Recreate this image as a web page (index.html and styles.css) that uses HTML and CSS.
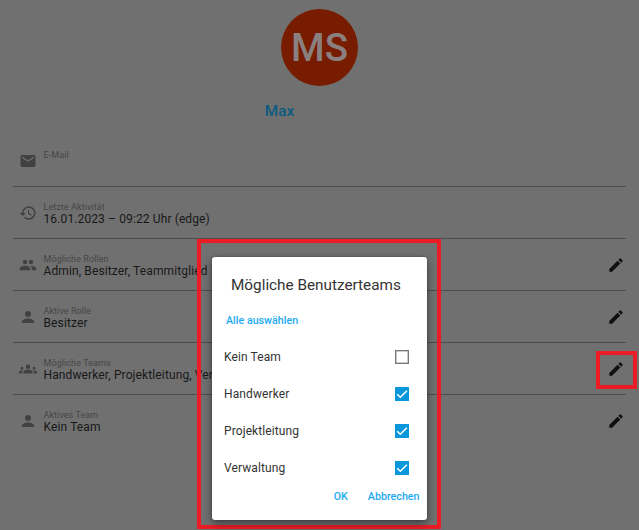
FILE: index.html
```html
<!DOCTYPE html>
<html lang="de">
<head>
<meta charset="utf-8">
<title>Profil</title>
<link rel="stylesheet" href="styles.css">
</head>
<body>
<svg class="symbols" aria-hidden="true">
  <symbol id="mail" viewBox="0 0 24 24"><path d="M20 4H4c-1.100 0-2 .9-2 2v12c0 1.100.9 2 2 2h16c1.100 0 2-.9 2-2V6c0-1.100-.9-2-2-2zm0 4-8 5-8-5V6l8 5 8-5z"/></symbol>
  <symbol id="history" viewBox="0 0 24 24"><path d="M13 3a9 9 0 0 0-9 9H1l3.900 3.900.07.14L9 12H6a7 7 0 1 1 2.060 4.940l-1.420 1.420A9 9 0 1 0 13 3zm-1 5v5l4.280 2.540.72-1.210-3.500-2.080V8z"/></symbol>
  <symbol id="people" viewBox="0 0 24 24"><path d="M16 11a3 3 0 1 0-3-3 3 3 0 0 0 3 3zm-8 0a3 3 0 1 0-3-3 3 3 0 0 0 3 3zm0 2c-2.330 0-7 1.170-7 3.500V19h14v-2.500C15 14.170 10.330 13 8 13zm8 0c-.29 0-.62.02-.97.05 1.160.84 1.970 1.970 1.970 3.450V19h6v-2.500c0-2.330-4.670-3.500-7-3.500z"/></symbol>
  <symbol id="person" viewBox="0 0 24 24"><path d="M12 12a4 4 0 1 0-4-4 4 4 0 0 0 4 4zm0 2c-2.670 0-8 1.340-8 4v2h16v-2c0-2.660-5.330-4-8-4z"/></symbol>
  <symbol id="groups" viewBox="0 0 24 24"><path d="M12 12.750c1.630 0 3.070.39 4.240.9 1.080.48 1.760 1.560 1.760 2.730V18H6v-1.610c0-1.180.68-2.260 1.760-2.730 1.170-.52 2.610-.91 4.240-.91zM4 13a2 2 0 1 0 0-4 2 2 0 0 0 0 4zm1.130 1.100A7 7 0 0 0 4 14c-.99 0-1.930.21-2.780.58A2 2 0 0 0 0 16.430V18h4.500v-1.610c0-.83.23-1.610.63-2.290zM20 13a2 2 0 1 0 0-4 2 2 0 0 0 0 4zm4 3.430c0-.81-.48-1.530-1.220-1.850A7 7 0 0 0 20 14c-.39 0-.76.04-1.130.1.400.68.630 1.460.63 2.290V18H24zM12 6a3 3 0 1 1 0 6 3 3 0 0 1 0-6z"/></symbol>
  <symbol id="edit" viewBox="0 0 24 24"><path d="M3 17.250V21h3.750L17.810 9.940l-3.750-3.750zM20.710 7.040a1 1 0 0 0 0-1.410l-2.340-2.340a1 1 0 0 0-1.410 0l-1.830 1.830 3.750 3.750z"/></symbol>
</svg>

<main class="profile">
  <header class="head">
    <div class="avatar">MS</div>
    <div class="name">Max</div>
  </header>
  <section class="list">
    <div class="row"><svg class="icon"><use href="#mail"/></svg><div class="text"><div class="label">E-Mail</div></div></div>
    <div class="row"><svg class="icon"><use href="#history"/></svg><div class="text"><div class="label">Letzte Aktivität</div><div class="value">16.01.2023 – 09:22 Uhr (edge)</div></div></div>
    <div class="row"><svg class="icon"><use href="#people"/></svg><div class="text"><div class="label">Mögliche Rollen</div><div class="value">Admin, Besitzer, Teammitglied</div></div><svg class="edit"><use href="#edit"/></svg></div>
    <div class="row"><svg class="icon"><use href="#person"/></svg><div class="text"><div class="label">Aktive Rolle</div><div class="value">Besitzer</div></div><svg class="edit"><use href="#edit"/></svg></div>
    <div class="row"><svg class="icon"><use href="#groups"/></svg><div class="text"><div class="label">Mögliche Teams</div><div class="value">Handwerker, Projektleitung, Verwaltung</div></div><svg class="edit"><use href="#edit"/></svg><span class="marker marker-edit"></span></div>
    <div class="row"><svg class="icon"><use href="#person"/></svg><div class="text"><div class="label">Aktives Team</div><div class="value">Kein Team</div></div><svg class="edit"><use href="#edit"/></svg></div>
  </section>
</main>

<div class="marker marker-dialog"></div>
<div class="dialog" role="dialog">
  <h1 class="title">Mögliche Benutzerteams</h1>
  <div class="all">Alle auswählen</div>
  <div class="options">
    <div class="option"><span>Kein Team</span><span class="box"></span></div>
    <div class="option"><span>Handwerker</span><span class="box checked"><svg viewBox="0 0 14 14"><path d="M2.200 7.300 5.300 10.300 11.900 3.700"/></svg></span></div>
    <div class="option"><span>Projektleitung</span><span class="box checked"><svg viewBox="0 0 14 14"><path d="M2.200 7.300 5.300 10.300 11.900 3.700"/></svg></span></div>
    <div class="option"><span>Verwaltung</span><span class="box checked"><svg viewBox="0 0 14 14"><path d="M2.200 7.300 5.300 10.300 11.900 3.700"/></svg></span></div>
  </div>
  <div class="actions"><span>OK</span><span>Abbrechen</span></div>
</div>
</body>
</html>
```
FILE: styles.css
```css
* { box-sizing: border-box; }
body {
  margin: 0;
  height: 530px;
  overflow: hidden;
  position: relative;
  background: #707070;
  font-family: Roboto, sans-serif;
}
.symbols { display: none; }
.head {
  height: 135px;
  padding-top: 9px;
  display: flex;
  flex-direction: column;
  align-items: center;
}
.avatar {
  width: 77px;
  height: 77px;
  border-radius: 50%;
  background: #781c00;
  color: #8b8080;
  font-size: 38.500px;
  font-weight: 500;
  line-height: 77px;
  text-align: center;
}
.name {
  margin: 15px 80px 0 0;
  font-size: 15.300px;
  font-weight: 500;
  line-height: 20px;
  color: #0b5a80;
}
.list { margin: 0 13px; }
.row {
  position: relative;
  display: flex;
  height: 52px;
  padding: 15px 1px 0 6px;
  border-bottom: 1px solid #4d4d4d;
}
.row:last-child { border-bottom: 0; }
.icon {
  width: 18px;
  height: 18px;
  margin-top: 2px;
  fill: #414141;
}
.text {
  flex: 1;
  min-width: 0;
  margin-left: 6.500px;
  white-space: nowrap;
}
.label { font-size: 9px; letter-spacing: .08px; line-height: 10px; color: #464646; }
.value { font-size: 12px; letter-spacing: .12px; line-height: 14px; color: #181818; }
.edit { width: 18px; height: 18px; margin-top: 2px; fill: #111; }
.marker { position: absolute; border: 4px solid #ed1c24; }
.marker-edit { left: 583px; top: 8px; width: 41px; height: 38px; }
.marker-dialog { left: 197px; top: 239px; width: 244px; height: 290px; }
.dialog {
  position: absolute;
  left: 212px;
  top: 256.500px;
  width: 214.500px;
  height: 263px;
  padding: 18px 7px 0 12px;
  border-radius: 3px;
  background: #fff;
  box-shadow: 0 4px 10px rgba(0, 0, 0, .4), 0 0 3px rgba(0, 0, 0, .3);
}
.title {
  margin: 0 0 0 7px;
  font-size: 15.300px;
  line-height: 20px;
  font-weight: 400;
  color: #333;
  white-space: nowrap;
}
.all { margin: 18px 0 0 2px; font-size: 10.700px; line-height: 16px; font-weight: 500; color: #1eaaf1; }
.options { margin-top: 10.500px; }
.option {
  height: 36.750px;
  padding-right: 10.500px;
  display: flex;
  align-items: center;
  justify-content: space-between;
  font-size: 12px;
  letter-spacing: .1px;
  color: #333;
}
.box { width: 14px; height: 14px; border: 1.500px solid #777; box-shadow: inset 0 0 0 .5px #999; }
.checked { border: 0; background: #0b97dc; box-shadow: none; }
.checked svg { display: block; width: 14px; height: 14px; fill: none; stroke: #fff; stroke-width: 1.500; }
.actions {
  display: flex;
  justify-content: flex-end;
  gap: 20px;
  margin-top: 2.500px;
  font-size: 10.700px;
  line-height: 16px;
  font-weight: 500;
  color: #1eaaf1;
}
```
